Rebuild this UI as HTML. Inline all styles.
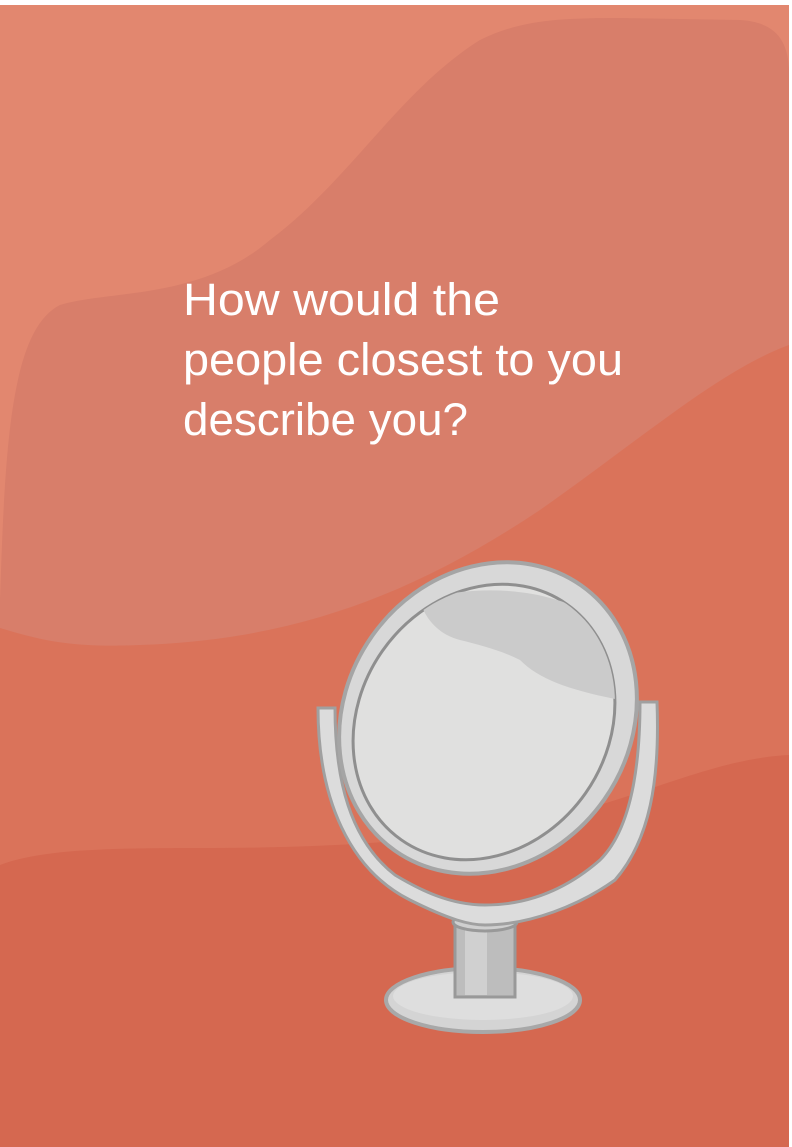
<!DOCTYPE html>
<html><head><style>
html,body{margin:0;padding:0;background:#fff;width:792px;height:1147px;overflow:hidden}
svg{display:block}
</style></head><body>
<svg width="792" height="1147" viewBox="0 0 792 1147" xmlns="http://www.w3.org/2000/svg">
<defs><clipPath id="m"><ellipse cx="484" cy="722" rx="124" ry="144" transform="rotate(35 484 722)"/></clipPath></defs>
<rect x="0" y="5" width="789" height="1142" fill="#e2876f"/>
<path d="M0 600 C5 450 10 330 60 305 C110 290 200 300 270 240 C350 180 400 90 480 40 C520 20 560 18 620 18 L740 20 C775 22 788 40 789 70 L789 1147 L0 1147 Z" fill="#d87e6a"/>
<path d="M0 628 C40 640 70 648 140 645 C300 640 420 590 540 510 C640 440 720 370 789 345 L789 1147 L0 1147 Z" fill="#da735a"/>
<path d="M0 865 C40 850 100 848 200 848 C350 848 480 840 600 805 C680 780 730 758 789 755 L789 1147 L0 1147 Z" fill="#d56850"/>
<g font-family="'Liberation Sans',sans-serif" font-size="45" fill="#fff">
<text x="183" y="315" textLength="317" lengthAdjust="spacingAndGlyphs">How would the</text>
<text x="183" y="375" textLength="440" lengthAdjust="spacingAndGlyphs">people closest to you</text>
<text x="183" y="435" textLength="285" lengthAdjust="spacingAndGlyphs">describe you?</text>
</g>
<ellipse cx="483" cy="1000" rx="97" ry="32" fill="#d4d4d4" stroke="#a8a8a8" stroke-width="4"/>
<ellipse cx="483" cy="996" rx="90" ry="24" fill="#dedede"/>
<rect x="455" y="922" width="60" height="75" fill="#bdbdbd" stroke="#999" stroke-width="3"/>
<rect x="465" y="925" width="22" height="70" fill="#d0d0d0"/>
<ellipse cx="485" cy="922" rx="32" ry="9" fill="#cfcfcf" stroke="#999" stroke-width="3"/>
<path d="M318 708 C318 800 350 870 410 900 C450 920 470 925 485 925 C530 925 580 905 615 880 C650 840 660 780 657 702 L640 702 C640 770 630 830 600 860 C560 895 520 905 485 905 C450 905 420 890 395 875 C350 840 335 780 335 708 Z" fill="#dcdcdc" stroke="#a0a0a0" stroke-width="3"/>
<ellipse cx="488" cy="718" rx="142" ry="162" transform="rotate(35 488 718)" fill="#d8d8d8" stroke="#a5a5a5" stroke-width="4"/>
<ellipse cx="484" cy="722" rx="124" ry="144" transform="rotate(35 484 722)" fill="#e0e0df" stroke="#8f8f8f" stroke-width="3"/>
<path clip-path="url(#m)" d="M420 600 C490 580 580 590 620 640 C630 660 630 690 620 700 C570 690 540 680 520 660 C500 650 480 645 460 640 C440 635 425 620 420 600 Z" fill="#cbcbcb"/>
</svg>
</body></html>
